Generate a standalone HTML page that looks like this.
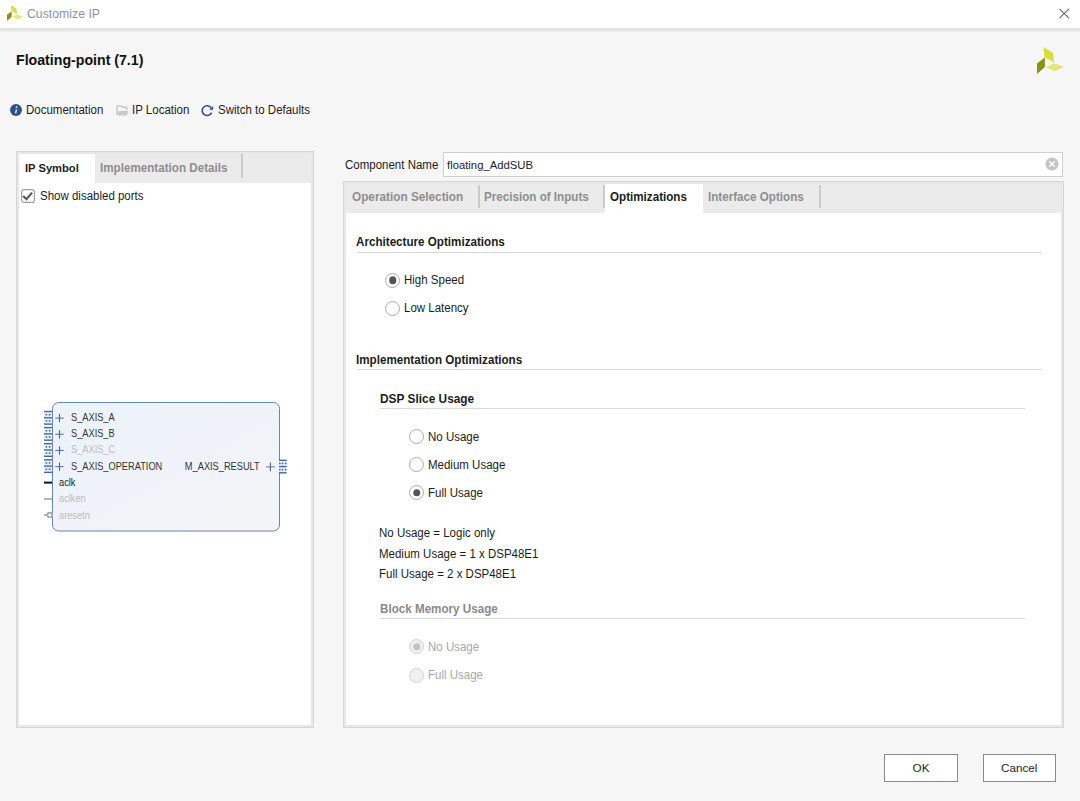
<!DOCTYPE html>
<html><head><meta charset="utf-8">
<style>
*{box-sizing:border-box;margin:0;padding:0}
html,body{width:1080px;height:801px;overflow:hidden;background:#f6f6f6;font-family:"Liberation Sans",sans-serif;color:#1c1c1c}
.a{position:absolute;white-space:nowrap;line-height:14px;font-size:12px;transform:scaleX(0.958);transform-origin:0 0}
.b{font-weight:bold;transform:scaleX(0.97)}
.g{color:#8e8e8e}
svg{position:absolute;overflow:visible}
#titlebar{position:absolute;left:0;top:0;width:1080px;height:28px;background:#fff}
#tline{position:absolute;left:0;top:28px;width:1080px;height:4px;background:linear-gradient(#e7e7e7 0,#e3e3e3 50%,#ececec 75%,#f2f2f2 100%)}
.panel{position:absolute;background:#fff;border:1px solid #d6d6d6}
.panel .in{position:absolute;left:0;top:0;right:0;bottom:0;border:2px solid #e7e7e7}
.tabbar{position:absolute;background:#ebebeb}
.sep{position:absolute;width:2px;background:#cbcbcb}
.hline{position:absolute;height:1px;background:#dadada}
.radio{position:absolute;width:15px;height:15px;border-radius:50%;border:1.8px solid #ababab;background:#fff}
.radio.on::after{content:"";position:absolute;left:50%;top:50%;transform:translate(-50%,-50%);width:7.5px;height:7.5px;border-radius:50%;background:#555}
.radio.dis{border-color:#d2d2d2;background:#f0f0f0}
.radio.dis.on::after{background:#c4c4c4}
.btn{position:absolute;height:28px;border:1px solid #8a8a8a;background:#fff;text-align:center;line-height:26px;font-size:11.7px}
</style></head><body>
<div id="titlebar"></div>
<div id="tline"></div>

<svg width="27" height="27" viewBox="0 0 27 27" style="left:7px;top:5px;width:16px;height:16px">
 <polygon points="6.3,0 15.8,5.8 17.1,15.3 7.7,10.3" fill="#d6df45"/>
 <polygon points="0,16.6 7.9,10.6 7.9,20 0,27" fill="#8d9316"/>
 <polygon points="9,20 17.1,16.2 27,20 17.6,24.3" fill="#e1e77e"/>
</svg>
<div class="a" id="ttl" style="left:27px;top:6.2px;font-size:13.6px;line-height:15px;color:#8d939b;transform:scaleX(0.903)">Customize IP</div>
<svg width="11" height="11" style="left:1058.5px;top:8px">
 <path d="M0.5 0.8L10 10.2M10 0.8L0.5 10.2" stroke="#6a6a6a" stroke-width="1.1" fill="none"/>
</svg>

<div class="a b" id="head" style="left:16px;top:51.5px;font-size:14.6px;line-height:16px;color:#111">Floating-point (7.1)</div>
<svg width="27" height="27" viewBox="0 0 27 27" style="left:1037px;top:46.5px">
 <polygon points="6.3,0 15.8,5.8 17.1,15.3 7.7,10.3" fill="#d6df38"/>
 <polygon points="0,16.6 7.9,10.6 7.9,20 0,27" fill="#8a9212"/>
 <polygon points="9,20 17.1,16.2 27,20 17.6,24.3" fill="#e0e878"/>
</svg>

<svg width="14" height="14" style="left:9px;top:103.3px">
 <circle cx="7" cy="7" r="5.95" fill="#2f4f8d"/>
 <circle cx="7.6" cy="4.1" r="0.95" fill="#f4f6fa"/>
 <path d="M7.5 6.3L6.6 10.3" stroke="#eef1f7" stroke-width="1.4"/>
</svg>
<div class="a" id="doc" style="left:26px;top:103px">Documentation</div>
<svg width="14" height="14" style="left:115px;top:103px">
 <path d="M2.1 12V2.9H6.6L7.6 4.2H11.6V7.2" stroke="#c9c9c9" stroke-width="1.5" fill="none"/>
 <path d="M3.8 7.9H13.2L11.9 12.6H2.4Z" fill="#c8c8c8"/>
</svg>
<div class="a" id="ipl" style="left:132px;top:103px">IP Location</div>
<svg width="14" height="14" style="left:200px;top:103px">
 <path d="M11.6 9.6A4.9 4.9 0 1 1 11.1 4.8" stroke="#2f4f8d" stroke-width="1.6" fill="none"/>
 <path d="M13.1 2.9L13.1 6.8L9.2 6.8Z" fill="#2f4f8d"/>
</svg>
<div class="a" id="sw" style="left:218px;top:103px">Switch to Defaults</div>

<!-- left panel -->
<div class="panel" style="left:16px;top:151px;width:298px;height:577px"><div class="in"></div></div>
<div class="tabbar" style="left:95px;top:154px;width:216px;height:29px"></div>
<div class="sep" style="left:241px;top:154px;height:24px"></div>
<div class="a b" style="left:25px;top:160.5px;font-size:11.5px">IP Symbol</div>
<div class="a b g" style="left:100px;top:160.5px">Implementation Details</div>
<svg width="14" height="14" style="left:21px;top:189px">
 <rect x="0.6" y="0.6" width="12.8" height="12.8" rx="2.5" fill="#fff" stroke="#a0a0a0" stroke-width="1.2"/>
 <path d="M2.2 7L5.5 10.2L11 3.6" stroke="#585858" stroke-width="2.2" fill="none"/>
</svg>
<div class="a" style="left:40px;top:188.8px">Show disabled ports</div>

<!--SYM--><svg width="250" height="140" style="left:40px;top:398px;font-family:'Liberation Sans';font-size:10px"><defs><linearGradient id="bg" x1="0" y1="0" x2="1" y2="1"><stop offset="0" stop-color="#ecf3fb"/><stop offset="1" stop-color="#f2f3f6"/></linearGradient></defs><rect x="12.5" y="4.5" width="227" height="128.5" rx="6" fill="url(#bg)" stroke="#6686b9" stroke-width="1"/><rect x="4" y="13.50" width="8" height="12.6" fill="#e8f0f9"/><path d="M4.00 13.50L12.00 13.50" stroke="#3f6aa3" stroke-width="1.4"/><path d="M4.00 19.80L12.00 19.80" stroke="#3f6aa3" stroke-width="1.4"/><path d="M4.00 26.10L12.00 26.10" stroke="#3f6aa3" stroke-width="1.4"/><rect x="5.60" y="15.85" width="1.6" height="1.6" fill="#3f6aa3"/><rect x="8.80" y="15.85" width="1.6" height="1.6" fill="#3f6aa3"/><rect x="5.60" y="22.15" width="1.6" height="1.6" fill="#3f6aa3"/><rect x="8.80" y="22.15" width="1.6" height="1.6" fill="#3f6aa3"/><path d="M15.30 20.10L23.70 20.10" stroke="#5a76a8" stroke-width="1.1"/><path d="M19.50 15.90L19.50 24.30" stroke="#4a6699" stroke-width="1.1"/><rect x="4" y="29.60" width="8" height="12.6" fill="#e8f0f9"/><path d="M4.00 29.60L12.00 29.60" stroke="#3f6aa3" stroke-width="1.4"/><path d="M4.00 35.90L12.00 35.90" stroke="#3f6aa3" stroke-width="1.4"/><path d="M4.00 42.20L12.00 42.20" stroke="#3f6aa3" stroke-width="1.4"/><rect x="5.60" y="31.95" width="1.6" height="1.6" fill="#3f6aa3"/><rect x="8.80" y="31.95" width="1.6" height="1.6" fill="#3f6aa3"/><rect x="5.60" y="38.25" width="1.6" height="1.6" fill="#3f6aa3"/><rect x="8.80" y="38.25" width="1.6" height="1.6" fill="#3f6aa3"/><path d="M15.30 36.27L23.70 36.27" stroke="#5a76a8" stroke-width="1.1"/><path d="M19.50 32.07L19.50 40.47" stroke="#4a6699" stroke-width="1.1"/><rect x="4" y="45.70" width="8" height="12.6" fill="#e8f0f9"/><path d="M4.00 45.70L12.00 45.70" stroke="#3f6aa3" stroke-width="1.4"/><path d="M4.00 52.00L12.00 52.00" stroke="#3f6aa3" stroke-width="1.4"/><path d="M4.00 58.30L12.00 58.30" stroke="#3f6aa3" stroke-width="1.4"/><rect x="5.60" y="48.05" width="1.6" height="1.6" fill="#3f6aa3"/><rect x="8.80" y="48.05" width="1.6" height="1.6" fill="#3f6aa3"/><rect x="5.60" y="54.35" width="1.6" height="1.6" fill="#3f6aa3"/><rect x="8.80" y="54.35" width="1.6" height="1.6" fill="#3f6aa3"/><path d="M15.30 52.44L23.70 52.44" stroke="#5a76a8" stroke-width="1.1"/><path d="M19.50 48.24L19.50 56.64" stroke="#4a6699" stroke-width="1.1"/><rect x="4" y="61.80" width="8" height="12.6" fill="#e8f0f9"/><path d="M4.00 61.80L12.00 61.80" stroke="#3f6aa3" stroke-width="1.4"/><path d="M4.00 68.10L12.00 68.10" stroke="#3f6aa3" stroke-width="1.4"/><path d="M4.00 74.40L12.00 74.40" stroke="#3f6aa3" stroke-width="1.4"/><rect x="5.60" y="64.15" width="1.6" height="1.6" fill="#3f6aa3"/><rect x="8.80" y="64.15" width="1.6" height="1.6" fill="#3f6aa3"/><rect x="5.60" y="70.45" width="1.6" height="1.6" fill="#3f6aa3"/><rect x="8.80" y="70.45" width="1.6" height="1.6" fill="#3f6aa3"/><path d="M15.30 68.61L23.70 68.61" stroke="#5a76a8" stroke-width="1.1"/><path d="M19.50 64.41L19.50 72.81" stroke="#4a6699" stroke-width="1.1"/><rect x="239" y="62.30" width="7.7" height="12.5" fill="#e8f0f9"/><path d="M239.00 62.30L246.70 62.30" stroke="#3f6aa3" stroke-width="1.4"/><path d="M239.00 68.55L246.70 68.55" stroke="#3f6aa3" stroke-width="1.4"/><path d="M239.00 74.80L246.70 74.80" stroke="#3f6aa3" stroke-width="1.4"/><rect x="239.00" y="64.62" width="1.6" height="1.6" fill="#3f6aa3"/><rect x="241.80" y="64.62" width="1.6" height="1.6" fill="#3f6aa3"/><rect x="244.90" y="64.62" width="1.6" height="1.6" fill="#3f6aa3"/><rect x="239.00" y="70.87" width="1.6" height="1.6" fill="#3f6aa3"/><rect x="241.80" y="70.87" width="1.6" height="1.6" fill="#3f6aa3"/><rect x="244.90" y="70.87" width="1.6" height="1.6" fill="#3f6aa3"/><path d="M226.00 68.90L234.80 68.90" stroke="#7f94bd" stroke-width="1.3"/><path d="M230.40 64.50L230.40 73.30" stroke="#4a6699" stroke-width="1.1"/><path d="M4.00 84.60L12.00 84.60" stroke="#111" stroke-width="2"/><path d="M4.00 101.00L12.00 101.00" stroke="#b5b5b5" stroke-width="2"/><path d="M4.00 117.00L7.50 117.00" stroke="#b0b0b0" stroke-width="2"/><circle cx="9.799999999999997" cy="117" r="2.4" fill="#fff" stroke="#aaaaaa" stroke-width="1.8"/><text transform="translate(31.00,23.10) scale(0.925,1)" fill="#333333" text-anchor="start">S_AXIS_A</text><text transform="translate(31.00,39.27) scale(0.925,1)" fill="#333333" text-anchor="start">S_AXIS_B</text><text transform="translate(31.00,55.44) scale(0.925,1)" fill="#bcbcbc" text-anchor="start">S_AXIS_C</text><text transform="translate(31.00,71.61) scale(0.925,1)" fill="#333333" text-anchor="start">S_AXIS_OPERATION</text><text transform="translate(219.70,72.10) scale(0.925,1)" fill="#333333" text-anchor="end">M_AXIS_RESULT</text><text transform="translate(19.00,88.20) scale(0.925,1)" fill="#1a1a1a" text-anchor="start">aclk</text><text transform="translate(19.00,104.40) scale(0.925,1)" fill="#bcbcbc" text-anchor="start">aclken</text><text transform="translate(19.00,120.60) scale(0.925,1)" fill="#bcbcbc" text-anchor="start">aresetn</text></svg><!--/SYM-->
<!-- right panel -->
<div class="a" style="left:345px;top:157.5px">Component Name</div>
<div style="position:absolute;left:443px;top:152px;width:619.5px;height:25px;background:#fff;border:1px solid #cfcfcf"></div>
<div class="a" style="left:446.5px;top:157.5px;font-size:11.8px">floating_AddSUB</div>
<svg width="14" height="14" style="left:1045px;top:157px">
 <circle cx="7" cy="7" r="6.5" fill="#c4c4c4"/>
 <path d="M4.2 4.2L9.8 9.8M9.8 4.2L4.2 9.8" stroke="#fff" stroke-width="1.5"/>
</svg>

<div class="panel" style="left:343px;top:181px;width:721px;height:547px"><div class="in"></div></div>
<div class="tabbar" style="left:346px;top:184px;width:259px;height:29px"></div>
<div class="tabbar" style="left:703px;top:184px;width:358px;height:29px"></div>
<div class="sep" style="left:478px;top:185px;height:23px"></div>
<div class="sep" style="left:603px;top:185px;height:23px"></div>
<div class="sep" style="left:819px;top:185px;height:23px"></div>
<div class="a b g" style="left:351.5px;top:190px;font-size:12.15px">Operation Selection</div>
<div class="a b g" style="left:484px;top:190px">Precision of Inputs</div>
<div class="a b" style="left:610px;top:190px">Optimizations</div>
<div class="a b g" style="left:708px;top:190px;font-size:12px">Interface Options</div>

<div class="a b" style="left:356px;top:235px">Architecture Optimizations</div>
<div class="hline" style="left:357px;top:252px;width:685px"></div>
<div class="radio on" style="left:385px;top:272.5px"></div>
<div class="a" style="left:404px;top:273px">High Speed</div>
<div class="radio" style="left:385px;top:300.5px"></div>
<div class="a" style="left:404px;top:301px">Low Latency</div>

<div class="a b" style="left:356px;top:353px">Implementation Optimizations</div>
<div class="hline" style="left:357px;top:369px;width:685px"></div>
<div class="a b" style="left:380px;top:392px;font-size:12.25px">DSP Slice Usage</div>
<div class="hline" style="left:380px;top:408px;width:645px"></div>
<div class="radio" style="left:409px;top:429px"></div>
<div class="a" style="left:428px;top:430.4px">No Usage</div>
<div class="radio" style="left:409px;top:457px"></div>
<div class="a" style="left:428px;top:458.4px">Medium Usage</div>
<div class="radio on" style="left:409px;top:485px"></div>
<div class="a" style="left:428px;top:486.4px">Full Usage</div>

<div class="a" style="left:379px;top:526.1px">No Usage = Logic only</div>
<div class="a" style="left:379px;top:547.1px">Medium Usage = 1 x DSP48E1</div>
<div class="a" style="left:379px;top:567.4px">Full Usage = 2 x DSP48E1</div>

<div class="a b" style="left:380px;top:602px;color:#8a8a8a">Block Memory Usage</div>
<div class="hline" style="left:380px;top:618px;width:645px"></div>
<div class="radio dis on" style="left:409px;top:639px"></div>
<div class="a" style="left:428px;top:639.5px;color:#a8a8a8">No Usage</div>
<div class="radio dis" style="left:409px;top:667.5px"></div>
<div class="a" style="left:428px;top:668px;color:#a8a8a8">Full Usage</div>

<div class="btn" style="left:884px;top:754px;width:74px">OK</div>
<div class="btn" style="left:982.5px;top:754px;width:73.5px">Cancel</div>

</body></html>
